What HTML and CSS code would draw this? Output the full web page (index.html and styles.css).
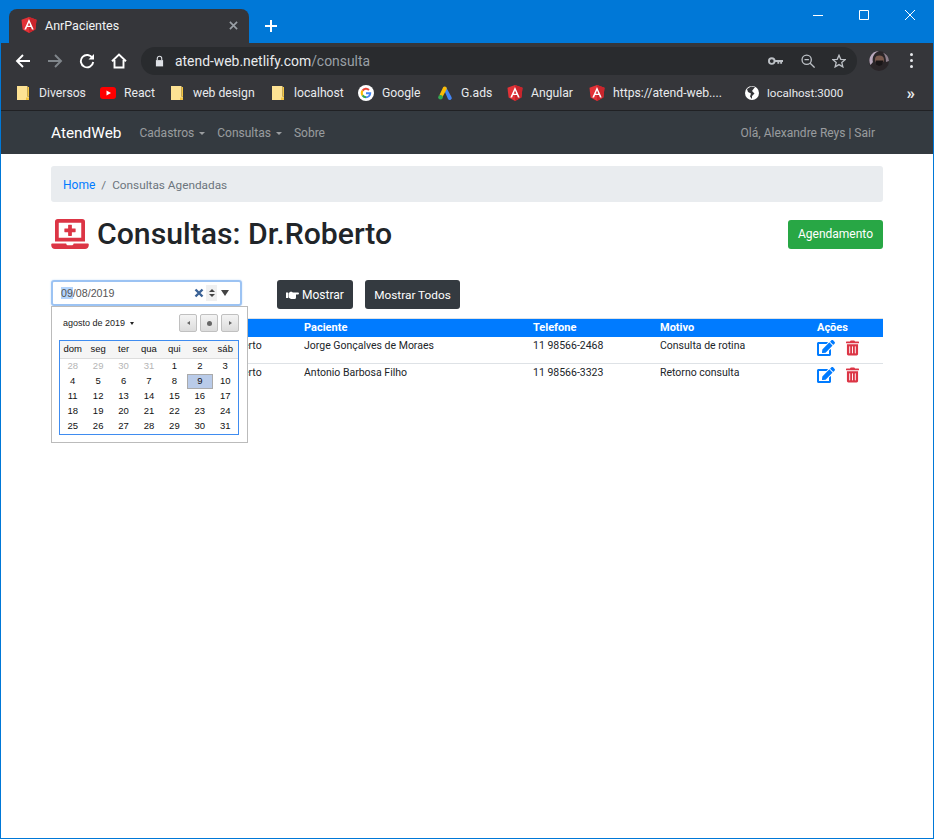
FILE: index.html
```html
<!DOCTYPE html>
<html lang="en">
<head>
  <meta charset="UTF-8">
  <title>AnrPacientes</title>
  <link rel="stylesheet" href="styles.css">
</head>
<body>
  <svg class="defs" width="0" height="0">
    <symbol id="ng" viewBox="0 0 16 17">
      <path d="M8 0L0 2.800l1.200 10.600L8 17l6.800-3.600L16 2.800z" fill="#e23237"/>
      <path d="M8 0v17l6.800-3.600L16 2.800z" fill="#c9252c"/>
      <path d="M8 2L3 13.200h1.900l1-2.500h4.200l1 2.500H13zM6.600 9.200L8 5.800l1.400 3.400z" fill="#fff"/>
    </symbol>
    <symbol id="folder" viewBox="0 0 12 14">
      <path d="M0 0h10.500v10.500H12V14H0z" fill="#fde293"/>
      <path d="M10.500 1H12v9.500h-1.500zM9 11.500h3V14H9z" fill="#f4c542"/>
    </symbol>
    <symbol id="edit" viewBox="0 0 576 512">
      <path d="M402.6 83.2l90.2 90.2c3.8 3.8 3.8 10 0 13.8L274.4 405.6l-92.8 10.3c-12.4 1.4-22.9-9.1-21.5-21.5l10.3-92.8L388.8 83.2c3.8-3.8 10-3.8 13.8 0zm162-22.9l-48.8-48.8c-15.2-15.2-39.9-15.2-55.2 0l-35.4 35.4c-3.8 3.8-3.8 10 0 13.8l90.2 90.2c3.8 3.8 10 3.8 13.8 0l35.4-35.4c15.2-15.3 15.2-40 0-55.2zM384 346.2V448H64V128h229.8c3.2 0 6.2-1.3 8.5-3.5l40-40c7.6-7.6 2.2-20.5-8.5-20.5H48C21.5 64 0 85.5 0 112v352c0 26.5 21.5 48 48 48h352c26.5 0 48-21.5 48-48V306.2c0-10.7-12.9-16-20.5-8.5l-40 40c-2.2 2.3-3.5 5.3-3.5 8.5z"/>
    </symbol>
    <symbol id="trash" viewBox="0 0 448 512">
      <path d="M32 464a48 48 0 0 0 48 48h288a48 48 0 0 0 48-48V128H32zm272-256a16 16 0 0 1 32 0v224a16 16 0 0 1-32 0zm-96 0a16 16 0 0 1 32 0v224a16 16 0 0 1-32 0zm-96 0a16 16 0 0 1 32 0v224a16 16 0 0 1-32 0zM432 32H312l-9.4-18.7A24 24 0 0 0 281.1 0H166.8a23.72 23.72 0 0 0-21.4 13.3L136 32H16A16 16 0 0 0 0 48v32a16 16 0 0 0 16 16h416a16 16 0 0 0 16-16V48a16 16 0 0 0-16-16z"/>
    </symbol>
  </svg>

  <div class="window">
    <div class="titlebar">
      <div class="tab">
        <svg class="tab-icon"><use href="#ng"/></svg>
        <span class="tab-title">AnrPacientes</span>
        <svg class="tab-close" viewBox="0 0 10 10"><path d="M1 1l8 8M9 1L1 9"/></svg>
      </div>
      <svg class="new-tab" viewBox="0 0 12 12"><path d="M6 0v12M0 6h12"/></svg>
      <div class="win-controls">
        <svg viewBox="0 0 10 10"><path d="M0 5.500h10"/></svg>
        <svg viewBox="0 0 10 10"><path d="M.5.500h9v9h-9z"/></svg>
        <svg viewBox="0 0 10 10"><path d="M0 0l10 10M10 0L0 10"/></svg>
      </div>
    </div>

    <div class="toolbar">
      <svg class="nav-btn" viewBox="0 0 16 16"><path d="M15 8H2M8 2L2 8l6 6"/></svg>
      <svg class="nav-btn off" viewBox="0 0 16 16"><path d="M1 8h13M8 2l6 6-6 6"/></svg>
      <svg class="nav-btn" viewBox="0 0 16 16"><path d="M13.500 5.200A6.200 6.200 0 1 0 14.200 9"/><path class="solid" d="M15 1v5.500H9.500z"/></svg>
      <svg class="nav-btn" viewBox="0 0 16 16"><path d="M1 8.200L8 1.500l7 6.700M3.500 7v7.500h9V7"/></svg>
      <div class="omnibox">
        <svg class="lock" viewBox="0 0 10 12"><path d="M2.500 5V3.200a2.500 2.500 0 0 1 5 0V5" fill="none" stroke="#dee1e6" stroke-width="1.2"/><path d="M1 5h8v7H1z" fill="#dee1e6"/></svg>
        <span class="url">atend-web.netlify.com<span class="url-path">/consulta</span></span>
        <div class="omni-icons">
          <svg class="key" viewBox="0 0 16 10"><circle cx="4" cy="5" r="3" fill="none" stroke-width="2"/><path d="M7 4h9v2h-1v2h-2V6h-1v2h-2V6H7z" class="solid"/></svg>
          <svg viewBox="0 0 16 16"><circle cx="6.500" cy="6.500" r="5.300" fill="none"/><path d="M4 6.500h5M10.500 10.500l5 5"/></svg>
          <svg viewBox="0 0 16 16"><path d="M8 1.500l2 4.600 5 .4-3.800 3.300 1.200 4.900L8 12.100l-4.400 2.600 1.200-4.900L1 6.500l5-.4z" fill="none"/></svg>
        </div>
      </div>
      <svg class="avatar" viewBox="0 0 20 20">
        <circle cx="10" cy="10" r="10" fill="#2a2528"/>
        <path d="M1 6a10 10 0 0 1 9-6c-3 1-5 3-6 6-.5 2-.5 4 0 5L1.500 14A10 10 0 0 1 1 6z" fill="#b8a8bc"/>
        <path d="M14 1.500A10 10 0 0 1 20 10l-3 1c0-4-1-7-3-9.500z" fill="#8d7f8c"/>
        <path d="M6 8c0-2.500 2-3.500 4.500-3.500S15 6 15 8.500 13 13 10.500 13 6 11 6 8z" fill="#7a5a4e"/>
        <path d="M7 9.500h7v1.500l-1 3-3 1-3-1.500z" fill="#191517"/>
      </svg>
      <div class="menu-dots"><i></i><i></i><i></i></div>
    </div>

    <div class="bookmarks">
      <div class="bm"><svg class="bm-folder"><use href="#folder"/></svg><span>Diversos</span></div>
      <div class="bm"><svg class="bm-icon" viewBox="0 0 16 16"><rect y="2" width="16" height="12" rx="3" fill="#f00"/><path d="M6.500 5.500L11 8l-4.500 2.500z" fill="#fff"/></svg><span>React</span></div>
      <div class="bm"><svg class="bm-folder"><use href="#folder"/></svg><span>web design</span></div>
      <div class="bm"><svg class="bm-folder"><use href="#folder"/></svg><span>localhost</span></div>
      <div class="bm">
        <svg class="bm-icon" viewBox="0 0 16 16">
          <circle cx="8" cy="8" r="8" fill="#fff"/>
          <path d="M8 8.200h4.200A4.300 4.300 0 0 1 8 12.300" fill="none" stroke="#4285f4" stroke-width="2"/>
          <path d="M11 5a4.300 4.300 0 0 0-6.500.6" fill="none" stroke="#ea4335" stroke-width="2"/>
          <path d="M4.500 5.600a4.300 4.300 0 0 0 0 4.800" fill="none" stroke="#fbbc05" stroke-width="2"/>
          <path d="M4.500 10.400A4.300 4.300 0 0 0 8 12.300" fill="none" stroke="#34a853" stroke-width="2"/>
        </svg><span>Google</span>
      </div>
      <div class="bm">
        <svg class="bm-icon" viewBox="0 0 16 16">
          <path d="M6 2.500l3-.5 5.500 10a2 2 0 0 1-3.500 2z" fill="#4285f4"/>
          <path d="M6 2.500a2 2 0 0 1 3.500 2L5.500 12l-3-2z" fill="#fbbc05"/>
          <circle cx="3.500" cy="12.300" r="2.300" fill="#34a853"/>
        </svg><span>G.ads</span>
      </div>
      <div class="bm"><svg class="bm-icon"><use href="#ng"/></svg><span>Angular</span></div>
      <div class="bm"><svg class="bm-icon"><use href="#ng"/></svg><span>https://atend-web....</span></div>
      <div class="bm">
        <svg class="bm-icon" viewBox="0 0 16 16">
          <circle cx="8" cy="8" r="7" fill="#fff"/>
          <path d="M7 1.500L3 4l1 3 3 1.500-1 3 2 2.500V11l2.500-2.500L8 6 9.500 4 11 2z" fill="#35363a"/>
        </svg><span class="bm-port">localhost:3000</span>
      </div>
      <div class="bm-more">»</div>
    </div>

    <nav class="navbar">
      <a class="brand">AtendWeb</a>
      <a class="nav-link caret">Cadastros</a>
      <a class="nav-link caret">Consultas</a>
      <a class="nav-link">Sobre</a>
      <span class="nav-user">Olá, Alexandre Reys | Sair</span>
    </nav>

    <main class="container">
      <div class="breadcrumb">
        <a class="crumb-link">Home</a>
        <span class="crumb-sep">/</span>
        <span>Consultas Agendadas</span>
      </div>

      <div class="page-head">
        <h2>
          <svg class="head-icon" viewBox="0 0 640 512"><path d="M232 224h56v56a8 8 0 0 0 8 8h48a8 8 0 0 0 8-8v-56h56a8 8 0 0 0 8-8v-48a8 8 0 0 0-8-8h-56v-56a8 8 0 0 0-8-8h-48a8 8 0 0 0-8 8v56h-56a8 8 0 0 0-8 8v48a8 8 0 0 0 8 8zM576 48a48.140 48.140 0 0 0-48-48H112a48.140 48.140 0 0 0-48 48v336h512zm-64 272H128V64h384zm112 96H381.540c-.74 19.810-14.710 32-32.740 32H288c-18.690 0-33.020-17.470-32.770-32H16a16 16 0 0 0-16 16v16c0 35.200 28.800 64 64 64h512c35.200 0 64-28.800 64-64v-16a16 16 0 0 0-16-16z"/></svg>
          Consultas: Dr.Roberto
        </h2>
        <button class="btn btn-green">Agendamento</button>
      </div>

      <div class="filters">
        <div class="date-wrap">
          <div class="date-input">
            <span class="date-text"><span class="date-sel">09</span>/08/2019</span>
            <svg class="date-clear" viewBox="0 0 10 10"><path d="M1.500 1.500l7 7M8.500 1.500l-7 7"/></svg>
            <span class="date-spin"><i class="up"></i><i class="down"></i></span>
            <span class="date-drop"></span>
          </div>
          <div class="calendar">
            <div class="cal-head">
              <span class="cal-month">agosto de 2019</span>
              <div class="cal-btns">
                <button class="cal-btn"><i class="arrow-l"></i></button>
                <button class="cal-btn"><i class="dot"></i></button>
                <button class="cal-btn"><i class="arrow-r"></i></button>
              </div>
            </div>
            <table class="cal-grid">
              <thead>
                <tr><th>dom</th><th>seg</th><th>ter</th><th>qua</th><th>qui</th><th>sex</th><th>sáb</th></tr>
              </thead>
              <tbody>
                <tr><td class="muted">28</td><td class="muted">29</td><td class="muted">30</td><td class="muted">31</td><td>1</td><td>2</td><td>3</td></tr>
                <tr><td>4</td><td>5</td><td>6</td><td>7</td><td>8</td><td class="picked">9</td><td>10</td></tr>
                <tr><td>11</td><td>12</td><td>13</td><td>14</td><td>15</td><td>16</td><td>17</td></tr>
                <tr><td>18</td><td>19</td><td>20</td><td>21</td><td>22</td><td>23</td><td>24</td></tr>
                <tr><td>25</td><td>26</td><td>27</td><td>28</td><td>29</td><td>30</td><td>31</td></tr>
              </tbody>
            </table>
          </div>
        </div>
        <button class="btn btn-dark btn-show">
          <svg class="hand" viewBox="0 0 13 8"><path d="M0 1.500h2V7H0zM2.500 2L5 .5l2 1h5a1 1 0 0 1 1 1 1 1 0 0 1-1 1H10V6.500A1.500 1.500 0 0 1 8.500 8H5L2.500 6.500z"/></svg>
          Mostrar
        </button>
        <button class="btn btn-dark btn-all">Mostrar Todos</button>
      </div>

      <table class="grid">
        <colgroup>
          <col class="c-date"><col class="c-doc"><col class="c-pat"><col class="c-tel"><col class="c-mot"><col>
        </colgroup>
        <thead>
          <tr><th></th><th></th><th>Paciente</th><th>Telefone</th><th>Motivo</th><th>Ações</th></tr>
        </thead>
        <tbody>
          <tr>
            <td></td><td>Dr.Roberto</td><td>Jorge Gonçalves de Moraes</td><td>11 98566-2468</td><td>Consulta de rotina</td>
            <td class="actions"><svg class="ic-edit"><use href="#edit"/></svg><svg class="ic-trash"><use href="#trash"/></svg></td>
          </tr>
          <tr>
            <td></td><td>Dr.Roberto</td><td>Antonio Barbosa Filho</td><td>11 98566-3323</td><td>Retorno consulta</td>
            <td class="actions"><svg class="ic-edit"><use href="#edit"/></svg><svg class="ic-trash"><use href="#trash"/></svg></td>
          </tr>
        </tbody>
      </table>
    </main>
  </div>
</body>
</html>
```

FILE: styles.css
```css
* {
  box-sizing: border-box;
}
html, body {
  margin: 0;
  height: 100%;
}
body {
  font-family: Roboto, "Open Sans", sans-serif;
  font-size: 12px;
  color: #212529;
  background: #fff;
}
.defs {
  position: absolute;
}
.window {
  height: 839px;
  display: flex;
  flex-direction: column;
  border: 1px solid #0078d7;
  border-top-width: 0;
}

/* browser chrome */
.titlebar {
  height: 43px;
  flex: none;
  background: #0078d7;
  display: flex;
  align-items: flex-end;
  padding-left: 8px;
}
.tab {
  width: 240px;
  height: 34px;
  background: #35363a;
  border-radius: 8px 8px 0 0;
  display: flex;
  align-items: center;
  padding: 0 10px 2px 12px;
  color: #f1f3f4;
}
.tab-icon {
  width: 16px;
  height: 16px;
  flex: none;
}
.tab-title {
  margin-left: 8px;
  flex: 1;
  font-size: 12.5px;
}
.tab-close {
  width: 9px;
  height: 9px;
  margin-right: 1px;
  stroke: #9aa0a6;
  stroke-width: 1.8;
  fill: none;
}
.new-tab {
  width: 12px;
  height: 12px;
  margin: 0 0 11px 16px;
  stroke: #fff;
  stroke-width: 2;
  fill: none;
}
.win-controls {
  margin-left: auto;
  align-self: flex-start;
  display: flex;
  gap: 36px;
  padding: 10px 18px 0 0;
}
.win-controls svg {
  width: 10px;
  height: 10px;
  stroke: #fff;
  stroke-width: 1;
  fill: none;
}
.toolbar {
  height: 35px;
  flex: none;
  background: #35363a;
  display: flex;
  align-items: center;
  padding-left: 14px;
}
.nav-btn {
  width: 16px;
  height: 16px;
  margin-right: 16px;
  stroke: #fff;
  stroke-width: 1.9;
  fill: none;
}
.nav-btn.off {
  stroke: #80868b;
}
.nav-btn .solid {
  fill: #fff;
  stroke: none;
}
.nav-btn:nth-child(4) {
  margin-right: 14px;
}
.omnibox {
  width: 716px;
  height: 28px;
  background: #292b2e;
  border-radius: 14px;
  display: flex;
  align-items: center;
  padding-left: 14px;
}
.lock {
  width: 9px;
  height: 12px;
}
.url {
  margin-left: 11px;
  font-size: 13.9px;
  color: #e8eaed;
}
.url-path {
  color: #9aa0a6;
}
.omni-icons {
  margin-left: auto;
  display: flex;
  align-items: center;
  gap: 17px;
  padding-right: 11px;
}
.omni-icons svg {
  width: 14px;
  height: 14px;
  stroke: #bdc1c6;
  stroke-width: 1.5;
  fill: #bdc1c6;
}
.omni-icons .key {
  width: 15px;
  margin-right: 1px;
}
.omni-icons .solid {
  stroke: none;
}
.avatar {
  width: 20px;
  height: 20px;
  margin-left: 12px;
}
.menu-dots {
  margin-left: 21px;
  display: flex;
  flex-direction: column;
  gap: 3px;
}
.menu-dots i {
  width: 3px;
  height: 3px;
  border-radius: 50%;
  background: #e8eaed;
}
.bookmarks {
  height: 33px;
  flex: none;
  background: #35363a;
  border-bottom: 1px solid #202124;
  display: grid;
  grid-template-columns: 83px 71px 101px 86px 79px 70px 82px 155px 161px 1fr;
  align-items: center;
  padding: 0 0 2px 16px;
  color: #e8eaed;
  font-size: 12.2px;
}
.bm {
  display: flex;
  align-items: center;
  white-space: nowrap;
}
.bm-folder {
  width: 12px;
  height: 14px;
  margin-right: 10px;
}
.bm-icon {
  width: 16px;
  height: 16px;
  margin-right: 8px;
}
.bm-port {
  margin-left: -1px;
  font-size: 11.6px;
}
.bm-more {
  font-size: 17px;
  font-weight: bold;
  line-height: 14px;
  text-align: right;
  padding-right: 18px;
}

/* page */
.navbar {
  height: 43px;
  flex: none;
  background: #343a40;
  display: flex;
  align-items: center;
  padding: 1px 58px 0 50px;
  font-size: 12px;
  color: rgba(255, 255, 255, .5);
}
.brand {
  color: #fff;
  font-size: 15.4px;
  margin-right: 18px;
}
.nav-link {
  margin-right: 12px;
}
.caret::after {
  content: "";
  display: inline-block;
  margin-left: 5px;
  vertical-align: 2px;
  border-top: 3.5px solid;
  border-left: 3.5px solid transparent;
  border-right: 3.5px solid transparent;
}
.nav-user {
  margin-left: auto;
}
.container {
  padding: 12px 50px 0;
}
.breadcrumb {
  height: 36px;
  background: #e9ecef;
  border-radius: 3px;
  display: flex;
  align-items: center;
  padding: 2px 12px 0;
  font-size: 11.8px;
  color: #6c757d;
}
.crumb-link {
  font-size: 12px;
  color: #007bff;
}
.crumb-sep {
  margin: 0 6px;
}
.page-head {
  display: flex;
  justify-content: space-between;
  align-items: center;
  margin-top: 16px;
  height: 32px;
}
h2 {
  margin: 0;
  display: flex;
  align-items: center;
  gap: 8px;
  font-size: 30.2px;
  font-weight: 500;
  line-height: 32px;
}
.head-icon {
  width: 38px;
  height: 30px;
  fill: #dc3545;
}
.btn {
  height: 29px;
  border: 0;
  border-radius: 3px;
  padding: 0;
  font: inherit;
  font-size: 12px;
  color: #fff;
}
.btn-green {
  width: 95px;
  background: #28a745;
}
.btn-dark {
  background: #343a40;
}
.btn-show {
  width: 76px;
  display: flex;
  align-items: center;
  gap: 3px;
  padding-left: 9px;
}
.btn-all {
  width: 95px;
  font-size: 11.8px;
}
.hand {
  width: 13px;
  height: 8px;
  fill: #fff;
}
.filters {
  display: flex;
  gap: 12px;
  margin-top: 30px;
}

/* date picker */
.date-wrap {
  position: relative;
  width: 191px;
  margin-right: 23px;
  font-family: "Liberation Sans", Arial, sans-serif;
}
.date-input {
  height: 26px;
  border: 2px solid #9cc3f3;
  border-radius: 3px;
  box-shadow: 0 0 2px #c4dcf8;
  display: flex;
  align-items: center;
  padding-left: 8px;
  font-size: 10.67px;
  color: #555;
}
.date-sel {
  background: #b3d4fc;
}
.date-text {
  flex: 1;
}
.date-clear {
  width: 10px;
  height: 10px;
  stroke: #3b6296;
  stroke-width: 2.4;
  fill: none;
}
.date-spin {
  width: 11px;
  height: 16px;
  margin-left: 2px;
  background: #f0f0f0;
  display: flex;
  flex-direction: column;
  align-items: center;
  justify-content: center;
  gap: 2px;
}
.date-spin i {
  border-left: 3px solid transparent;
  border-right: 3px solid transparent;
}
.date-spin .up {
  border-bottom: 3.5px solid #444;
}
.date-spin .down {
  border-top: 3.5px solid #444;
}
.date-drop {
  margin: 0 11px 0 4px;
  border-top: 6px solid #444;
  border-left: 4px solid transparent;
  border-right: 4px solid transparent;
}
.calendar {
  position: absolute;
  left: 0;
  top: 26px;
  width: 197px;
  height: 137px;
  background: #fff;
  border: 1px solid #bbb;
  padding: 7px 8px 0 7px;
  z-index: 5;
}
.cal-head {
  display: flex;
  align-items: center;
  justify-content: space-between;
  height: 18px;
  padding-left: 4px;
  font-size: 9px;
  color: #222;
}
.cal-month::after {
  content: "";
  display: inline-block;
  margin-left: 5px;
  vertical-align: 1px;
  border-top: 3px solid #222;
  border-left: 2.5px solid transparent;
  border-right: 2.5px solid transparent;
}
.cal-btns {
  display: flex;
  gap: 3px;
}
.cal-btn {
  width: 18px;
  height: 18px;
  padding: 0;
  border: 1px solid #c0c0c0;
  border-radius: 2px;
  background: linear-gradient(#f4f4f4, #dcdcdc);
  display: flex;
  align-items: center;
  justify-content: center;
}
.arrow-l {
  border-right: 3px solid #666;
  border-top: 2.5px solid transparent;
  border-bottom: 2.5px solid transparent;
}
.arrow-r {
  border-left: 3px solid #666;
  border-top: 2.5px solid transparent;
  border-bottom: 2.5px solid transparent;
}
.dot {
  width: 5px;
  height: 5px;
  border-radius: 50%;
  background: #666;
}
.cal-grid {
  margin-top: 8px;
  width: 180px;
  height: 95px;
  border: 1px solid #3f8cf0;
  border-collapse: separate;
  border-spacing: 0;
  table-layout: fixed;
  font-size: 9.5px;
  color: #111;
  text-align: center;
}
.cal-grid th {
  height: 18px;
  padding: 0 0 2px;
  font-weight: normal;
  background: #f5f5f5;
  border-bottom: 1px solid #ddd;
}
.cal-grid td {
  height: 15px;
  padding: 0 0 2px;
}
.cal-grid .muted {
  color: #b5b5b5;
}
.cal-grid .picked {
  background: #b9cbe9;
  border: 1px solid #aaa;
}

/* table */
.grid {
  width: 832px;
  margin-top: 9px;
  border-collapse: collapse;
  table-layout: fixed;
  font-size: 10.5px;
}
.c-date {
  width: 161px;
}
.c-doc {
  width: 92px;
}
.c-pat {
  width: 229px;
}
.c-tel {
  width: 127px;
}
.c-mot {
  width: 157px;
}
.grid th {
  height: 18px;
  padding: 0;
  background: #007bff;
  border-top: 1px solid #dee2e6;
  color: #fff;
  font-size: 11px;
  font-weight: bold;
  text-align: left;
}
.grid td {
  height: 27px;
  padding: 2px 0 0;
  vertical-align: top;
  border-bottom: 1px solid #dee2e6;
}
.grid tr:last-child td {
  border-bottom: 0;
}
.actions {
  display: flex;
  gap: 11px;
}
.ic-edit {
  width: 18px;
  height: 16px;
  margin-top: 1px;
  fill: #007bff;
}
.ic-trash {
  width: 13px;
  height: 16px;
  margin-top: 1px;
  fill: #dc3545;
}
```
